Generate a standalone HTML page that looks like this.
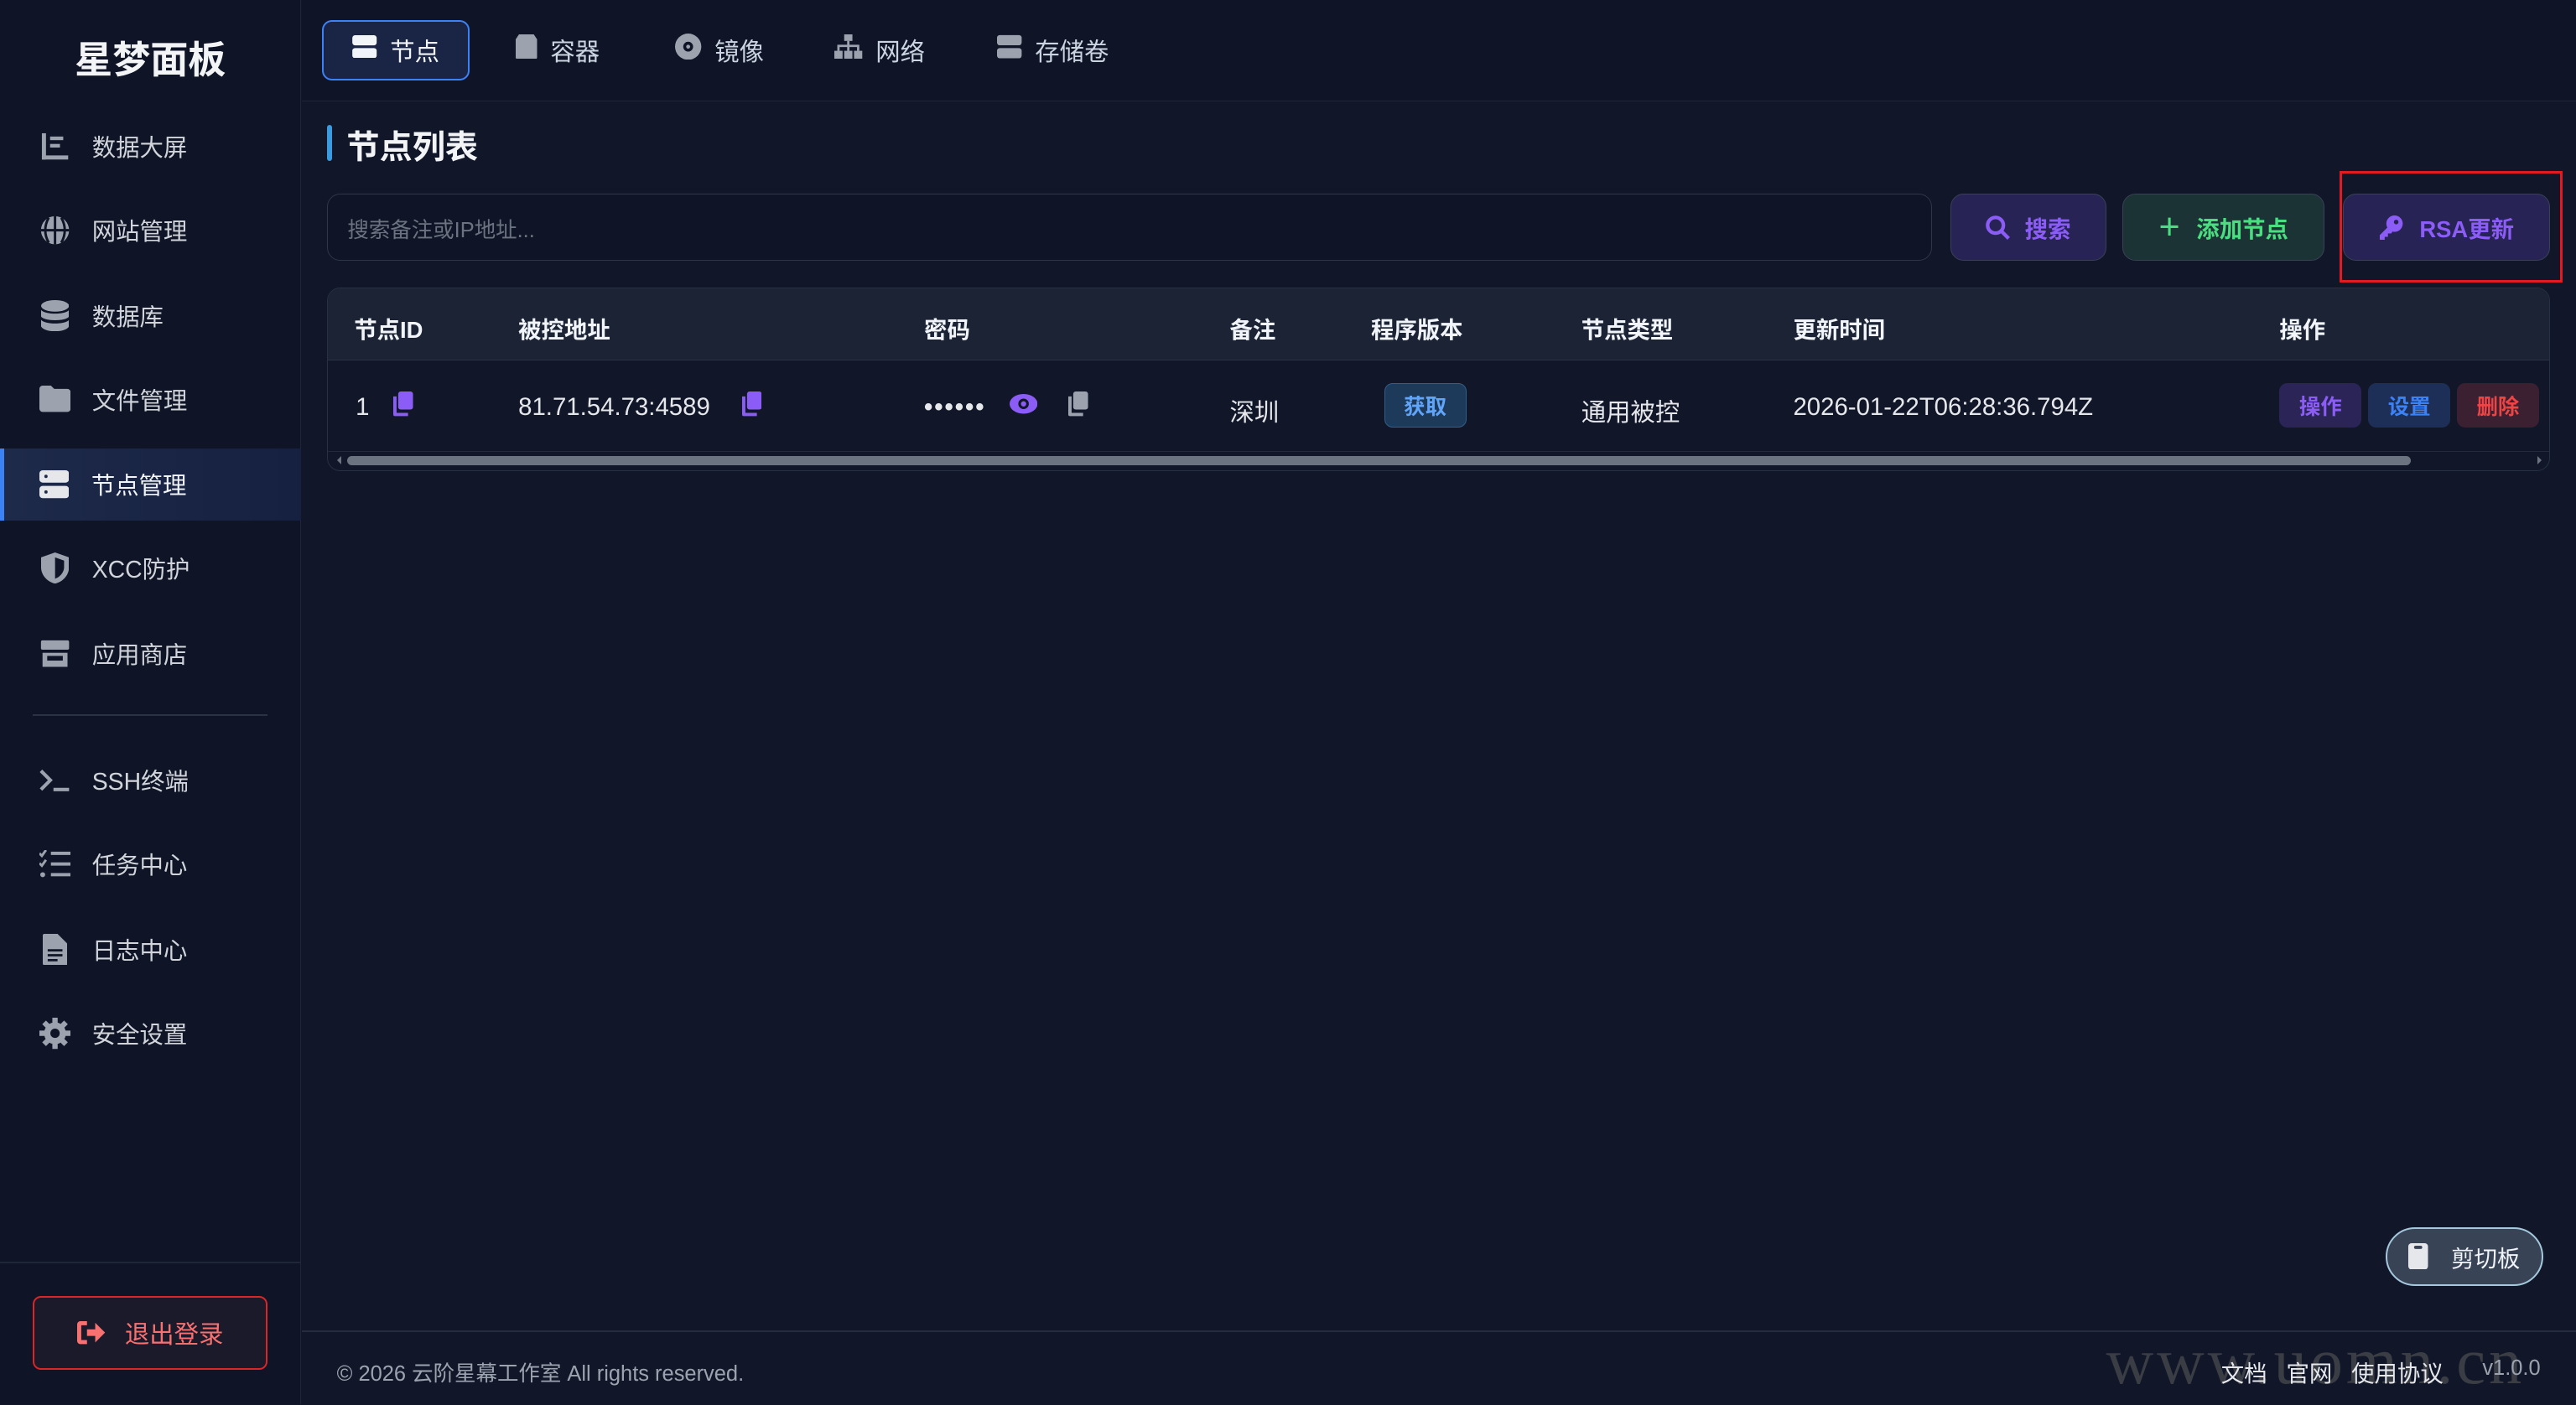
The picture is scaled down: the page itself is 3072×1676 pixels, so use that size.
<!DOCTYPE html>
<html><head><meta charset="utf-8"><style>
*{margin:0;padding:0;box-sizing:border-box}
html,body{width:3072px;height:1676px;overflow:hidden;background:#111729}
#w{zoom:1.95918;width:1568px;height:855px;position:relative;font-family:"Liberation Sans","Noto Sans CJK SC",sans-serif;color:#e5e7eb}
.a{position:absolute}
.side{left:0;top:0;width:183px;height:855px;background:#0f1526;border-right:1px solid #1e2638}
.logo{left:0;width:183px;top:18px;text-align:center;font-size:23px;font-weight:bold;color:#f3f4f6}
.ni{left:0;width:183px;height:44px;display:flex;align-items:center;padding-left:24px;font-size:14.5px;color:#d1d5db}
.ni .ic{width:19px;height:19px;margin-right:13px;display:flex;align-items:center;justify-content:center}
.act{background:linear-gradient(90deg,#1e2a4a,#162040);border-left:3px solid #3b82f6;padding-left:21px}
.top{left:184px;top:0;right:0;height:62px;border-bottom:1px solid #1f2737;background:#0f1527}
.tab{top:12px;height:37px;display:flex;align-items:center;font-size:15px;color:#cbd5e1}
.tab .ic{margin-right:8px}
.tact{left:196px;width:90px;border:1.5px solid #3b82f6;border-radius:6px;background:#1a2545;justify-content:center;color:#f1f5f9}
.btn{top:118px;height:41px;border-radius:8px;display:flex;align-items:center;justify-content:center;font-size:14px;font-weight:bold;border:1px solid #3a4156}
.tbl{left:199px;top:175px;width:1353px;height:112px;border:1px solid #273044;border-radius:8px;overflow:hidden}
.th{left:0;top:0;width:100%;height:44px;background:#1b2334;border-bottom:1px solid #2a3346}
.tx{font-size:14px;font-weight:bold;color:#f1f5f9;top:14px}
.td{font-size:15px;color:#e5e7eb;top:64px}
.sb{border-radius:5px;height:27px;top:58px;width:50px;display:flex;align-items:center;justify-content:center;font-size:13px;font-weight:bold}
</style></head><body><div id="w">
<div class="a side"></div>
<div class="a logo">星梦面板</div>
<div class="a ni" style="top:67px"><span class="ic"><svg width="18" height="18" viewBox="0 0 18 18" fill="#9ca3af"><rect x="1" y="1" width="2.5" height="16"/><rect x="1" y="14.5" width="16" height="2.5"/><rect x="6" y="3" width="8" height="2.2"/><rect x="6" y="7.5" width="6" height="2.2"/></svg></span>数据大屏</div>
<div class="a ni" style="top:118px"><span class="ic"><svg width="19" height="19" viewBox="0 0 20 20"><circle cx="10" cy="10" r="9" fill="#9ca3af"/><path d="M1 10h18M10 1v18M6 2c-3 5-3 11 0 16M14 2c3 5 3 11 0 16" stroke="#0f1526" stroke-width="1.6" fill="none"/></svg></span>网站管理</div>
<div class="a ni" style="top:170px"><span class="ic"><svg width="17" height="19" viewBox="0 0 17 19" fill="#9ca3af"><ellipse cx="8.5" cy="3.5" rx="8.5" ry="3.5"/><path d="M0 6c2 3 15 3 17 0v4c-2 3-15 3-17 0zM0 12c2 3 15 3 17 0v4c-2 4-15 4-17 0z"/></svg></span>数据库</div>
<div class="a ni" style="top:221px"><span class="ic"><svg width="19" height="16" viewBox="0 0 19 16" fill="#9ca3af"><path d="M0 2a2 2 0 012-2h5l2 2h8a2 2 0 012 2v10a2 2 0 01-2 2H2a2 2 0 01-2-2z"/></svg></span>文件管理</div>
<div class="a ni act" style="top:273px;color:#f1f5f9"><span class="ic"><svg width="18" height="17" viewBox="0 0 18 17" fill="#e5e7eb"><rect width="18" height="7.5" rx="2"/><rect y="9.5" width="18" height="7.5" rx="2"/><circle cx="4" cy="3.7" r="1" fill="#1e2a4a"/><circle cx="4" cy="13.2" r="1" fill="#1e2a4a"/></svg></span>节点管理</div>
<div class="a ni" style="top:324px"><span class="ic"><svg width="17" height="19" viewBox="0 0 17 19"><path d="M8.5 0L17 3v6c0 5-4 9-8.5 10C4 18 0 14 0 9V3z" fill="#9ca3af"/><path d="M8.5 3v13c3-1 5.5-4 5.5-7V5z" fill="#0f1526"/></svg></span>XCC防护</div>
<div class="a ni" style="top:376px"><span class="ic"><svg width="20" height="17" viewBox="0 0 20 17" fill="#9ca3af"><rect x="1" y="0" width="18" height="6" rx="1"/><rect x="2" y="8" width="16" height="9"/><rect x="5" y="10" width="10" height="3" fill="#0f1526"/></svg></span>应用商店</div>
<div class="a" style="left:20px;top:435px;width:143px;height:1px;background:#2a3244"></div>
<div class="a ni" style="top:453px"><span class="ic"><svg width="20" height="16" viewBox="0 0 20 16" stroke="#9ca3af" stroke-width="2.2" fill="none"><path d="M1 2l6 6-6 6M9 14h10"/></svg></span>SSH终端</div>
<div class="a ni" style="top:504px"><span class="ic"><svg width="19" height="17" viewBox="0 0 19 17" fill="#9ca3af"><path d="M0 2l1.5 1.5L4 0" stroke="#9ca3af" stroke-width="1.5" fill="none"/><rect x="7" y="1" width="12" height="2"/><path d="M0 8l1.5 1.5L4 6" stroke="#9ca3af" stroke-width="1.5" fill="none"/><rect x="7" y="7.5" width="12" height="2"/><circle cx="2" cy="15" r="1.5"/><rect x="7" y="14" width="12" height="2"/></svg></span>任务中心</div>
<div class="a ni" style="top:556px"><span class="ic"><svg width="15" height="19" viewBox="0 0 15 19" fill="#9ca3af"><path d="M0 1a1 1 0 011-1h8l6 6v12a1 1 0 01-1 1H1a1 1 0 01-1-1z"/><path d="M3 10h9M3 13h9M3 16h6" stroke="#0f1526" stroke-width="1.4"/></svg></span>日志中心</div>
<div class="a ni" style="top:607px"><span class="ic"><svg width="20" height="20" viewBox="0 0 20 20"><circle cx="10" cy="10" r="7" fill="#9ca3af"/><g stroke="#9ca3af" stroke-width="3.4"><path d="M10 0v20M0 10h20M3 3l14 14M17 3L3 17"/></g><circle cx="10" cy="10" r="3" fill="#0f1526"/></svg></span>安全设置</div>
<div class="a" style="left:0;top:768px;width:183px;height:1px;background:#1e2638"></div>
<div class="a" style="left:20px;top:789px;width:143px;height:45px;border:1.5px solid #dc2626;border-radius:5px;background:#1a1a2a;display:flex;align-items:center;justify-content:center;color:#f87171;font-size:15px"><svg width="18" height="16" viewBox="0 0 18 16" style="margin-right:11px" fill="#f87171"><path d="M6 1H2a2 2 0 00-2 2v10a2 2 0 002 2h4v-2.5H2.5v-9H6z"/><path d="M11 2l6 6-6 6v-4H6V6h5z"/></svg>退出登录</div>

<div class="a top"></div>
<div class="a tab tact"><span class="ic"><svg width="15" height="14" viewBox="0 0 18 17" fill="#f1f5f9"><rect width="18" height="7.5" rx="2"/><rect y="9.5" width="18" height="7.5" rx="2"/></svg></span>节点</div>
<div class="a tab" style="left:314px"><span class="ic"><svg width="13" height="15" viewBox="0 0 13 15" fill="#9ca3af"><path d="M2 0h9l2 3v11a1 1 0 01-1 1H1a1 1 0 01-1-1V3z"/></svg></span>容器</div>
<div class="a tab" style="left:411px"><span class="ic"><svg width="16" height="16" viewBox="0 0 16 16"><circle cx="8" cy="8" r="8" fill="#9ca3af"/><circle cx="8" cy="8" r="3" fill="#0f1527"/><circle cx="8" cy="8" r="1.2" fill="#9ca3af"/></svg></span>镜像</div>
<div class="a tab" style="left:508px"><span class="ic"><svg width="17" height="15" viewBox="0 0 17 15" fill="#9ca3af"><rect x="6" y="0" width="5" height="4"/><rect x="0" y="10" width="5" height="5"/><rect x="12" y="10" width="5" height="5"/><rect x="6" y="10" width="5" height="5"/><path d="M8.5 4v6M2.5 10V7h12v3" stroke="#9ca3af" stroke-width="1.4" fill="none"/></svg></span>网络</div>
<div class="a tab" style="left:607px"><span class="ic"><svg width="15" height="15" viewBox="0 0 18 17" fill="#9ca3af"><rect width="18" height="7.5" rx="2"/><rect y="9.5" width="18" height="7.5" rx="2"/></svg></span>存储卷</div>

<div class="a" style="left:199px;top:76px;width:3px;height:22px;background:#3b9be0;border-radius:2px"></div>
<div class="a" style="left:211px;top:74px;font-size:20px;font-weight:bold;color:#f3f4f6">节点列表</div>
<div class="a" style="left:199px;top:118px;width:977px;height:41px;border:1px solid #2e3648;border-radius:8px;background:#0f1526;padding:11px 12px;font-size:13px;color:#6b7280">搜索备注或IP地址...</div>
<div class="a btn" style="left:1187px;width:95px;background:#272354;color:#8b5cf6"><svg width="15" height="15" viewBox="0 0 15 15" style="margin-right:9px" stroke="#8b5cf6" stroke-width="2.2" fill="none"><circle cx="6" cy="6" r="4.8"/><path d="M9.5 9.5L14 14"/></svg>搜索</div>
<div class="a btn" style="left:1292px;width:123px;background:#1b3334;color:#4ade80"><span style="font-size:22px;font-weight:normal;margin-right:10px;line-height:1">+</span>添加节点</div>
<div class="a btn" style="left:1426px;width:126px;background:#272354;color:#8b5cf6"><svg width="15" height="15" viewBox="0 0 15 15" style="margin-right:10px" fill="#8b5cf6"><circle cx="10" cy="5" r="5"/><path d="M7 6L1 12v3h3v-2h2v-2h2l2-3z"/><circle cx="11" cy="4" r="1.4" fill="#272354"/></svg>RSA更新</div>
<div class="a" style="left:1424px;top:104px;width:136px;height:68px;border:2px solid #e01b24"></div>

<div class="a tbl">
<div class="a th"></div>
<div class="a tx" style="left:16px">节点ID</div>
<div class="a tx" style="left:116px">被控地址</div>
<div class="a tx" style="left:363px">密码</div>
<div class="a tx" style="left:549px">备注</div>
<div class="a tx" style="left:635px">程序版本</div>
<div class="a tx" style="left:763px">节点类型</div>
<div class="a tx" style="left:892px">更新时间</div>
<div class="a tx" style="left:1188px">操作</div>
<div class="a td" style="left:17px">1</div>
<svg class="a" style="left:40px;top:63px" width="12" height="15" viewBox="0 0 12 15" fill="#8b5cf6"><rect x="3" y="0" width="9" height="11" rx="1.5"/><path d="M0 3h2v10h7v2H1a1 1 0 01-1-1z"/></svg>
<div class="a td" style="left:116px">81.71.54.73:4589</div>
<svg class="a" style="left:252px;top:63px" width="12" height="15" viewBox="0 0 12 15" fill="#8b5cf6"><rect x="3" y="0" width="9" height="11" rx="1.5"/><path d="M0 3h2v10h7v2H1a1 1 0 01-1-1z"/></svg>
<div class="a td" style="left:363px;letter-spacing:1px;font-weight:bold">••••••</div>
<svg class="a" style="left:415px;top:64px" width="17" height="13" viewBox="0 0 17 13"><ellipse cx="8.5" cy="6.5" rx="8.5" ry="6" fill="#8b5cf6"/><circle cx="8.5" cy="6.5" r="3.2" fill="#111729"/><circle cx="8.5" cy="6.5" r="1.6" fill="#8b5cf6"/></svg>
<svg class="a" style="left:451px;top:63px" width="12" height="15" viewBox="0 0 12 15" fill="#9ca3af"><rect x="3" y="0" width="9" height="11" rx="1.5"/><path d="M0 3h2v10h7v2H1a1 1 0 01-1-1z"/></svg>
<div class="a td" style="left:549px">深圳</div>
<div class="a sb" style="left:643px;background:#1e3a5a;border:1px solid #2f5f8a;color:#60a5fa">获取</div>
<div class="a td" style="left:763px">通用被控</div>
<div class="a td" style="left:892px">2026-01-22T06:28:36.794Z</div>
<div class="a sb" style="left:1188px;background:#2a2457;color:#8b5cf6">操作</div>
<div class="a sb" style="left:1242px;background:#1d2f57;color:#3b82f6">设置</div>
<div class="a sb" style="left:1296px;background:#3a2030;color:#ef4444">删除</div>
<div class="a" style="left:0;top:99px;width:100%;height:12px;border-top:1px solid #222a3b"></div>
<div class="a" style="left:12px;top:102px;width:1256px;height:6px;background:#6b7280;border-radius:3px"></div>
<div class="a" style="left:3px;top:102px;width:0;height:0;border:3px solid transparent;border-right-color:#6b7280"></div>
<div class="a" style="right:2px;top:102px;width:0;height:0;border:3px solid transparent;border-left-color:#6b7280"></div>
</div>

<div class="a" style="left:1452px;top:747px;width:96px;height:36px;border:1.5px solid #a5c8dd;border-radius:18px;background:#394356;display:flex;align-items:center;justify-content:center;font-size:14px;color:#f1f5f9"><svg width="12" height="16" viewBox="0 0 12 16" style="margin-right:14px"><rect width="12" height="16" rx="2" fill="#e5e7eb"/><rect x="3.5" y="1.5" width="5" height="2" rx="1" fill="#394356"/></svg>剪切板</div>

<div class="a" style="left:184px;top:810px;right:0;height:1px;background:#242c3d"></div>
<div class="a" style="left:205px;top:826px;font-size:13px;color:#9ca3af">© 2026 云阶星幕工作室 All rights reserved.</div>
<div class="a" style="left:1282px;top:806px;font-size:40px;font-family:'Liberation Serif',serif;color:#3a3d44;letter-spacing:2px">www.uomn.cn</div>
<div class="a" style="left:1352px;top:825px;font-size:14px;color:#e5e7eb">文档&nbsp;&nbsp;&nbsp;官网&nbsp;&nbsp;&nbsp;使用协议</div>
<div class="a" style="left:1511px;top:826px;font-size:13px;color:#9ca3af">v1.0.0</div>
</div></body></html>
